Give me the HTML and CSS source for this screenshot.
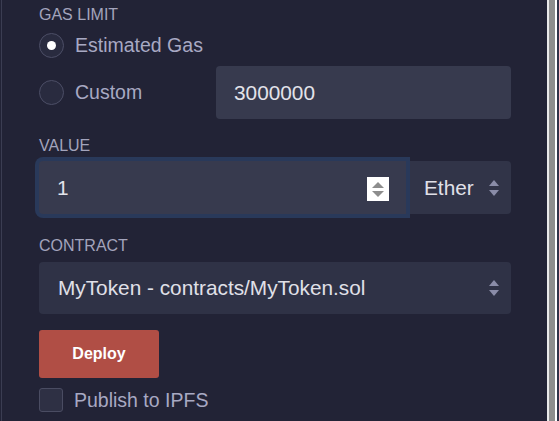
FILE: index.html
```html
<!DOCTYPE html>
<html>
<head>
  <title>Deploy</title>
  <link rel="stylesheet" href="styles.css">
</head>
<body>
  <div class="panel">
    <label class="field-label">GAS LIMIT</label>
    <div class="radio-row first">
      <span class="radio checked"></span>
      <span class="radio-text">Estimated Gas</span>
    </div>
    <div class="radio-row">
      <span class="radio"></span>
      <span class="radio-text">Custom</span>
      <div class="text-input gas-input">3000000</div>
    </div>

    <label class="field-label value-label">VALUE</label>
    <div class="input-group">
      <div class="text-input value-input focused">
        <span>1</span>
        <span class="spin">
          <svg width="22" height="24" viewBox="0 0 22 24">
            <rect width="22" height="24" fill="#ffffff"/>
            <polygon points="11,5 17,11 5,11" fill="#8d8d8d"/>
            <polygon points="5,14 17,14 11,20" fill="#8d8d8d"/>
          </svg>
        </span>
      </div>
      <div class="select unit-select">
        <span>Ether</span>
        <svg class="arrows" width="12" height="20" viewBox="0 0 12 20">
          <polygon points="6,2 11,8 1,8" fill="#8a8ca8"/>
          <polygon points="1,12 11,12 6,18" fill="#8a8ca8"/>
        </svg>
      </div>
    </div>

    <label class="field-label contract-label">CONTRACT</label>
    <div class="select contract-select">
      <span>MyToken - contracts/MyToken.sol</span>
      <svg class="arrows" width="12" height="20" viewBox="0 0 12 20">
        <polygon points="6,2 11,8 1,8" fill="#8a8ca8"/>
        <polygon points="1,12 11,12 6,18" fill="#8a8ca8"/>
      </svg>
    </div>

    <button class="deploy">Deploy</button>

    <div class="check-row">
      <span class="checkbox"></span>
      <span class="radio-text">Publish to IPFS</span>
    </div>
  </div>
  <div class="scrollbar"></div>
  <div class="edge"></div>
</body>
</html>
```

FILE: styles.css
```css
html, body {
  height: 100%;
}
body {
  margin: 0;
  display: flex;
  background-color: #222336;
  font-family: "Liberation Sans", Arial, sans-serif;
  overflow: hidden;
}
.panel {
  flex: 1;
  margin-left: 1px;
  border-left: 1px solid #3b3d52;
  padding: 6px 36px 0 37px;
}
.scrollbar {
  width: 6px;
  background-color: #8e8e8e;
  border-left: 2px solid #e9e9e9;
  border-right: 2px solid #ffffff;
}
.edge {
  width: 2px;
  background-color: #31334a;
}
.field-label {
  display: block;
  font-size: 16px;
  line-height: 18px;
  color: #a3a4bc;
}
.value-label {
  margin-top: 18px;
}
.contract-label {
  margin-top: 23px;
}
.radio-row {
  display: flex;
  align-items: center;
  height: 53px;
}
.radio-row.first {
  height: 42px;
}
.radio {
  width: 23px;
  height: 23px;
  border: 1px solid #4c4e66;
  border-radius: 50%;
  background-color: #292b3f;
  display: flex;
  align-items: center;
  justify-content: center;
}
.radio.checked::after {
  content: "";
  width: 9px;
  height: 9px;
  border-radius: 50%;
  background-color: #ffffff;
}
.radio-text {
  margin-left: 11px;
  font-size: 19.5px;
  color: #a8a9c3;
}
.text-input {
  box-sizing: border-box;
  height: 53px;
  display: flex;
  align-items: center;
  padding: 0 18px;
  background-color: #373a4e;
  border-radius: 4px;
  font-size: 20.8px;
  color: #e3e3ea;
}
.gas-input {
  margin-left: auto;
  width: 295px;
}
.input-group {
  display: flex;
  margin-top: 6px;
  height: 53px;
}
.value-input {
  width: 367px;
  justify-content: space-between;
  padding-right: 17px;
  border-radius: 4px 0 0 4px;
}
.value-input.focused {
  position: relative;
  z-index: 1;
  box-shadow: 0 0 0 4px #29395a;
}
.spin {
  display: flex;
  margin-top: 2px;
}
.select {
  box-sizing: border-box;
  display: flex;
  align-items: center;
  justify-content: space-between;
  padding: 0 11px 0 18px;
  font-size: 20.8px;
  color: #e0e0e8;
}
.unit-select {
  flex: 1;
  background-color: #313448;
  border-radius: 0 4px 4px 0;
}
.contract-select {
  margin-top: 7px;
  height: 52px;
  padding-left: 19px;
  background-color: #2f3246;
  border-radius: 4px;
}
.deploy {
  display: block;
  margin-top: 16px;
  width: 120px;
  height: 48px;
  border: none;
  border-radius: 3px;
  background-color: #b04e45;
  color: #ffffff;
  font-family: "Liberation Sans", Arial, sans-serif;
  font-size: 16px;
  font-weight: bold;
}
.check-row {
  display: flex;
  align-items: center;
  margin-top: 10px;
}
.checkbox {
  width: 22px;
  height: 22px;
  border: 1px solid #4a4c62;
  border-radius: 3px;
  background-color: #2e3044;
}
```
